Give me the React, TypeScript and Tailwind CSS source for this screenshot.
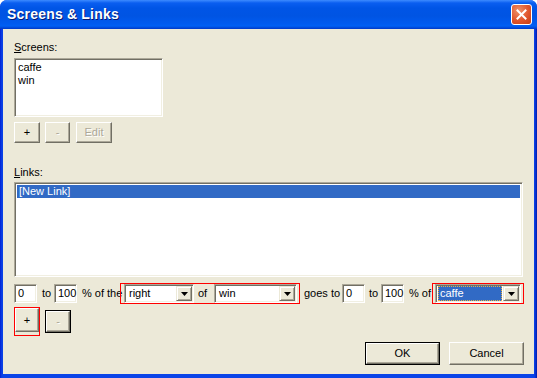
import React from "react";

const font = { fontFamily: '"Liberation Sans", Arial, sans-serif' };

const Sunken = ({ className = "", children }: { className?: string; children?: React.ReactNode }) => (
  <div
    className={`border border-t-[#ACA899] border-l-[#ACA899] border-r-white border-b-white shadow-[inset_1px_1px_0_#716F64,inset_-1px_-1px_0_#F1EFE2] ${className}`}
  >
    {children}
  </div>
);

const Btn = ({
  label,
  className = "",
  disabled = false,
  isDefault = false,
}: {
  label: string;
  className?: string;
  disabled?: boolean;
  isDefault?: boolean;
}) => {
  const inner = (
    <div
      className={`flex h-full w-full items-center justify-center border border-t-white border-l-white border-r-[#716F64] border-b-[#716F64] bg-[#ECE9D8] shadow-[inset_-1px_-1px_0_#ACA899] ${
        disabled ? "text-[#ACA899] [text-shadow:1px_1px_0_#fff]" : "text-black"
      }`}
    >
      {label}
    </div>
  );
  if (isDefault) return <div className={`border border-black ${className}`}>{inner}</div>;
  return <div className={className}>{inner}</div>;
};

const Arrow = () => (
  <div className="flex h-full w-[16px] shrink-0 items-center justify-center border border-t-[#ECE9D8] border-l-[#ECE9D8] border-r-[#716F64] border-b-[#716F64] bg-[#ECE9D8] shadow-[inset_1px_1px_0_#fff,inset_-1px_-1px_0_#ACA899]">
    <svg width="7" height="4" viewBox="0 0 7 4">
      <path d="M0 0h7L3.5 4z" fill="#000" />
    </svg>
  </div>
);

const Combo = ({ value, className = "", selected = false }: { value: string; className?: string; selected?: boolean }) => (
  <Sunken className={`flex h-[19px] bg-white p-[1px] ${className}`}>
    <div className="flex min-w-0 flex-1 items-center pl-[1px] pr-[1px]">
      {selected ? (
        <div className="flex h-[15px] flex-1 items-center border border-dotted border-[#E8B040] bg-[#316AC5] pl-[1px] text-white">
          {value}
        </div>
      ) : (
        <span className="pl-[2px]">{value}</span>
      )}
    </div>
    <Arrow />
  </Sunken>
);

const Field = ({ value, className = "" }: { value: string; className?: string }) => (
  <Sunken className={`flex h-[19px] w-[23px] shrink-0 items-center bg-white pl-[3px] ${className}`}>{value}</Sunken>
);

export default function App() {
  return (
    <div className="h-[378px] w-[537px] bg-white text-[11px] leading-[13px]" style={font}>
      <div className="flex h-[378px] w-[537px] flex-col overflow-hidden rounded-t-[7px] bg-[linear-gradient(to_right,#0019CF_0px,#0838E0_1px,#0A44E8_3px,#0A44E8_534px,#0838E0_535px,#001CA8_537px)]">
        {/* title bar */}
        <div className="flex h-[29px] shrink-0 items-center justify-between bg-[linear-gradient(to_bottom,#3D8BFF_0px,#0A5EF0_3px,#0055E6_8px,#0054E3_16px,#005BF0_24px,#0060F4_26px,#0046D6_28px,#0038C8_29px)] pl-[7px] pr-[5px]">
          <span className="text-[14px] font-bold tracking-[0.2px] text-white [text-shadow:1px_1px_0_#0A1870]">
            Screens &amp; Links
          </span>
          <div className="flex h-[21px] w-[21px] items-center justify-center rounded-[3px] border border-white bg-[radial-gradient(circle_at_35%_30%,#F0926A,#E0552C_55%,#C43D14)]">
            <svg width="11" height="11" viewBox="0 0 11 11">
              <path d="M1.5 1.5l8 8M9.5 1.5l-8 8" stroke="#fff" strokeWidth="2" strokeLinecap="square" />
            </svg>
          </div>
        </div>
        {/* client */}
        <div className="mx-[3px] mb-[4px] flex flex-1 flex-col bg-[#ECE9D8] pl-[11px] pt-[12px] text-black">
          <div className="h-[13px]">
            <u>S</u>creens:
          </div>
          <Sunken className="mt-[4px] h-[59px] w-[149px] bg-white px-[3px] pt-[2px]">
            <div>caffe</div>
            <div>win</div>
          </Sunken>
          <div className="mt-[5px] flex gap-[5px]">
            <Btn label="+" className="h-[21px] w-[26px]" />
            <Btn label="-" disabled className="h-[21px] w-[25px]" />
            <Btn label="Edit" disabled className="ml-[1px] h-[21px] w-[36px]" />
          </div>
          <div className="mt-[23px] h-[13px]">
            <u>L</u>inks:
          </div>
          <Sunken className="mt-[3px] h-[95px] w-[509px] bg-white p-[2px]">
            <div className="h-[13px] bg-[#316AC5] pl-[2px] text-white">[New Link]</div>
          </Sunken>
          {/* link row */}
          <div className="mt-[6px] flex h-[21px] items-center">
            <Field value="0" />
            <span className="ml-[5px] w-[11px] shrink-0">to</span>
            <Field value="100" className="ml-[1px]" />
            <span className="ml-[5px] w-[38px] shrink-0 whitespace-nowrap">% of the</span>
            <div className="flex h-[21px] w-[180px] shrink-0 items-center border border-[#FF0000]">
              <Combo value="right" className="ml-[3px] w-[70px]" />
              <span className="ml-[4px] w-[12px] shrink-0">of</span>
              <Combo value="win" className="ml-[4px] w-[83px]" />
            </div>
            <span className="ml-[4px] w-[37px] shrink-0 whitespace-nowrap">goes to</span>
            <Field value="0" className="ml-[1px]" />
            <span className="ml-[4px] w-[11px] shrink-0">to</span>
            <Field value="100" className="ml-[1px]" />
            <span className="ml-[5px] w-[22px] shrink-0 whitespace-nowrap">% of</span>
            <div className="ml-[1px] flex h-[21px] w-[92px] shrink-0 items-center border border-[#FF0000]">
              <Combo value="caffe" selected className="ml-[2px] w-[86px]" />
            </div>
          </div>
          <div className="mt-[3px] flex items-start">
            <div className="flex h-[29px] w-[26px] items-start justify-center border border-[#FF0000] pt-[0px]">
              <Btn label="+" className="h-[24px] w-[24px]" />
            </div>
            <Btn label="-" disabled isDefault className="ml-[5px] mt-[3px] h-[23px] w-[26px]" />
          </div>
          <div className="mt-[6px] flex justify-end gap-[9px] pr-[10px]">
            <Btn label="OK" isDefault className="h-[23px] w-[75px]" />
            <Btn label="Cancel" className="h-[23px] w-[75px]" />
          </div>
        </div>
      </div>
    </div>
  );
}
